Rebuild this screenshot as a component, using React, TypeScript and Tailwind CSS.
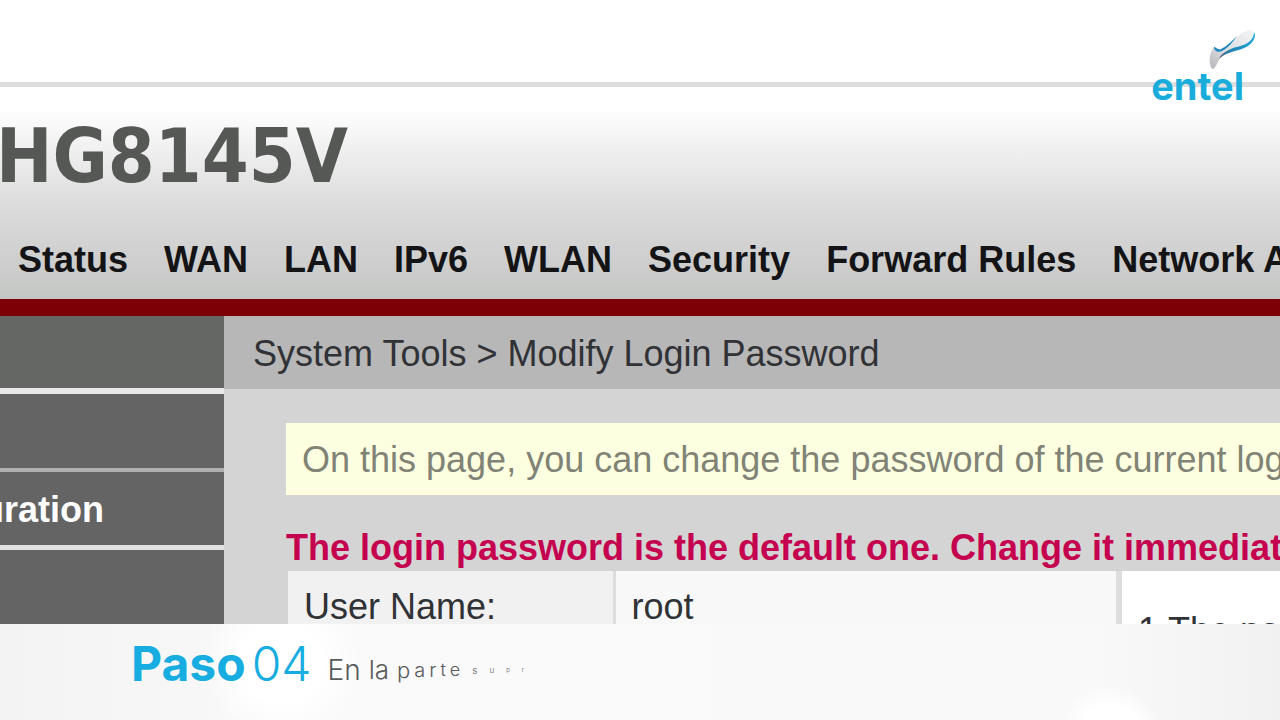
import React from 'react';

const tabs = ['Status', 'WAN', 'LAN', 'IPv6', 'WLAN', 'Security', 'Forward Rules', 'Network Application'];

// Caption letters, they shrink as they come in
const spacedLetters = [
  { char: 'p', size: 'text-[22px]' },
  { char: 'a', size: 'text-[20px]' },
  { char: 'r', size: 'text-[20px]' },
  { char: 't', size: 'text-[18px]' },
  { char: 'e', size: 'text-[18px]' },
];

const fadingLetters = [
  { char: 's', size: 'text-[10px]' },
  { char: 'u', size: 'text-[8px]' },
  { char: 'p', size: 'text-[6px]' },
  { char: 'r', size: 'text-[6px]' },
];

function EntelLogo() {
  return (
    <div className="absolute top-7 right-9 flex flex-col items-end text-[#1aaddc]">
      <svg width="48" height="42" viewBox="0 0 48 42" className="-mr-3" aria-hidden="true">
        <defs>
          <linearGradient id="wing" x1="0" y1="1" x2="1" y2="0">
            <stop offset="0" stopColor="#b4b4b8" />
            <stop offset="0.4" stopColor="#dcdde0" />
            <stop offset="1" stopColor="#f4f5f6" />
          </linearGradient>
          <linearGradient id="edge" x1="0" y1="1" x2="1" y2="0">
            <stop offset="0" stopColor="#5a5470" />
            <stop offset="0.35" stopColor="#1d86b8" />
            <stop offset="1" stopColor="#27b5e0" />
          </linearGradient>
        </defs>
        <path d="M4 41 C2 38 1 33 2 28 C3 24 4 21 6 19 C7 22 10 24 14 22 C20 19 24 14 29 9 C33 5 37 3 41 2 C46 2 48 6 45 11 C42 18 35 20 28 22 C21 24 14 27 11 32 C9 36 7 41 4 41 Z" fill="url(#wing)" />
        <path d="M46 4 C49 8 45 15 40 18 C34 22 28 22 21 25 C17 26 14 28 11 31 C13 26 18 23 25 20 C32 18 38 17 42 13 C45 10 46 7 46 4 Z" fill="url(#edge)" />
        <path d="M6 19 C8 19 9 22 13 21 C19 18 24 13 29 8 C25 14 20 20 14 23 C10 25 6 23 6 19 Z" fill="#2189bf" />
      </svg>
      <span className="font-['Inter',sans-serif] text-[38px] leading-8 font-bold">entel</span>
    </div>
  );
}

export default function App() {
  return (
    <div className="relative flex h-screen flex-col overflow-hidden bg-white font-['Liberation_Sans',sans-serif] text-[36px] leading-10 text-[#303236]">
      <div className="flex min-h-0 flex-1 flex-col overflow-hidden">
        {/* --- HEADER --- */}
        <header className="mt-[82px] shrink-0 border-t-[5px] border-b-[17px] border-t-[#dedede] border-b-[#7c0006] bg-linear-to-b from-white from-10% via-[#dadada] via-58% to-[#c4c6c4]">
          <h1 className="pt-[25px] font-['DejaVu_Sans_Condensed','DejaVu_Sans',sans-serif] text-[75px] leading-[88px] font-bold text-[#565856]">
            <span className="-ml-1">HG8145V</span>
          </h1>
          <nav className="flex gap-9 overflow-hidden pt-10 pb-[19px] pl-[18px] font-bold whitespace-nowrap text-[#141416]">
            {tabs.map((tab) => (
              <a key={tab} href="#">{tab}</a>
            ))}
          </nav>
        </header>

        <div className="flex min-h-0 flex-1">
          {/* --- SIDE MENU --- */}
          <aside className="flex w-56 shrink-0 flex-col overflow-hidden font-bold text-white">
            <div className="h-[78px] shrink-0 border-b-[6px] border-[#e9e9e9] bg-[#646764]" />
            <div className="h-[78px] shrink-0 border-b-4 border-[#b0b0b0] bg-[#646464]" />
            <a href="#" className="flex h-[78px] shrink-0 items-center justify-end border-b-[5px] border-[#e0e0e0] bg-[#646464] pt-0.5 pr-[120px]">
              Configuration
            </a>
            <div className="flex-1 bg-[#646464]" />
          </aside>

          {/* --- CONTENT --- */}
          <main className="min-w-0 flex-1 overflow-hidden bg-[#d4d4d4] whitespace-nowrap">
            <div className="flex h-[73px] items-center bg-[#b7b7b7] pt-0.5 pl-[29px]">
              System Tools &gt; Modify Login Password
            </div>
            <div className="pt-[34px] pl-[62px]">
              <p className="bg-[#fdffe1] pt-[17px] pb-[15px] pl-4 text-[#808375]">
                On this page, you can change the password of the current login user.
              </p>
              <p className="pt-[33px] font-bold text-[#c4004f]">
                The login password is the default one. Change it immediately.
              </p>
              <div className="mt-[3px] flex pl-0.5">
                <table className="w-[828px] shrink-0 table-fixed border-collapse">
                  <tbody>
                    <tr className="align-top">
                      <th scope="row" className="w-[326px] border-r-3 border-[#dddddd] bg-[#f1f1f1] py-4 pl-4 text-left font-normal">
                        User Name:
                      </th>
                      <td className="bg-[#f8f8f8] py-4 pl-4">root</td>
                    </tr>
                  </tbody>
                </table>
                <div className="flex-1 border-l-6 border-[#dddddd] bg-white pt-10 pl-4">1.The password must</div>
              </div>
            </div>
          </main>
        </div>
      </div>

      {/* --- STEP CAPTION --- */}
      <footer className="flex h-24 shrink-0 items-center bg-[radial-gradient(circle_at_22%_40%,#ffffff_0,#ffffff_40px,transparent_80px),radial-gradient(circle_at_1110px_110px,#ffffff_0,#ffffff_30px,transparent_50px),linear-gradient(to_right,#f3f3f3,#fafafa_25%,#f9f9f9_85%,#f1f1f1)] pb-4 pl-[131px] font-['Inter',sans-serif]">
        <h2 className="flex items-baseline gap-1.5 text-[48px] leading-[56px] text-[#17ade0]">
          <span className="font-bold">Paso</span>
          <span className="font-light">04</span>
        </h2>
        <p className="flex items-center gap-2 pt-3 pl-4 leading-8 font-light text-[#58595b]">
          <span className="text-[28px]">En</span>
          <span className="text-[26px]">la</span>
          <span className="flex items-center gap-1">
            {spacedLetters.map((l) => (
              <span key={l.char} className={l.size}>{l.char}</span>
            ))}
          </span>
          <span className="flex items-center gap-3 pl-1">
            {fadingLetters.map((l) => (
              <span key={l.char} className={l.size}>{l.char}</span>
            ))}
          </span>
        </p>
      </footer>

      <EntelLogo />
    </div>
  );
}
